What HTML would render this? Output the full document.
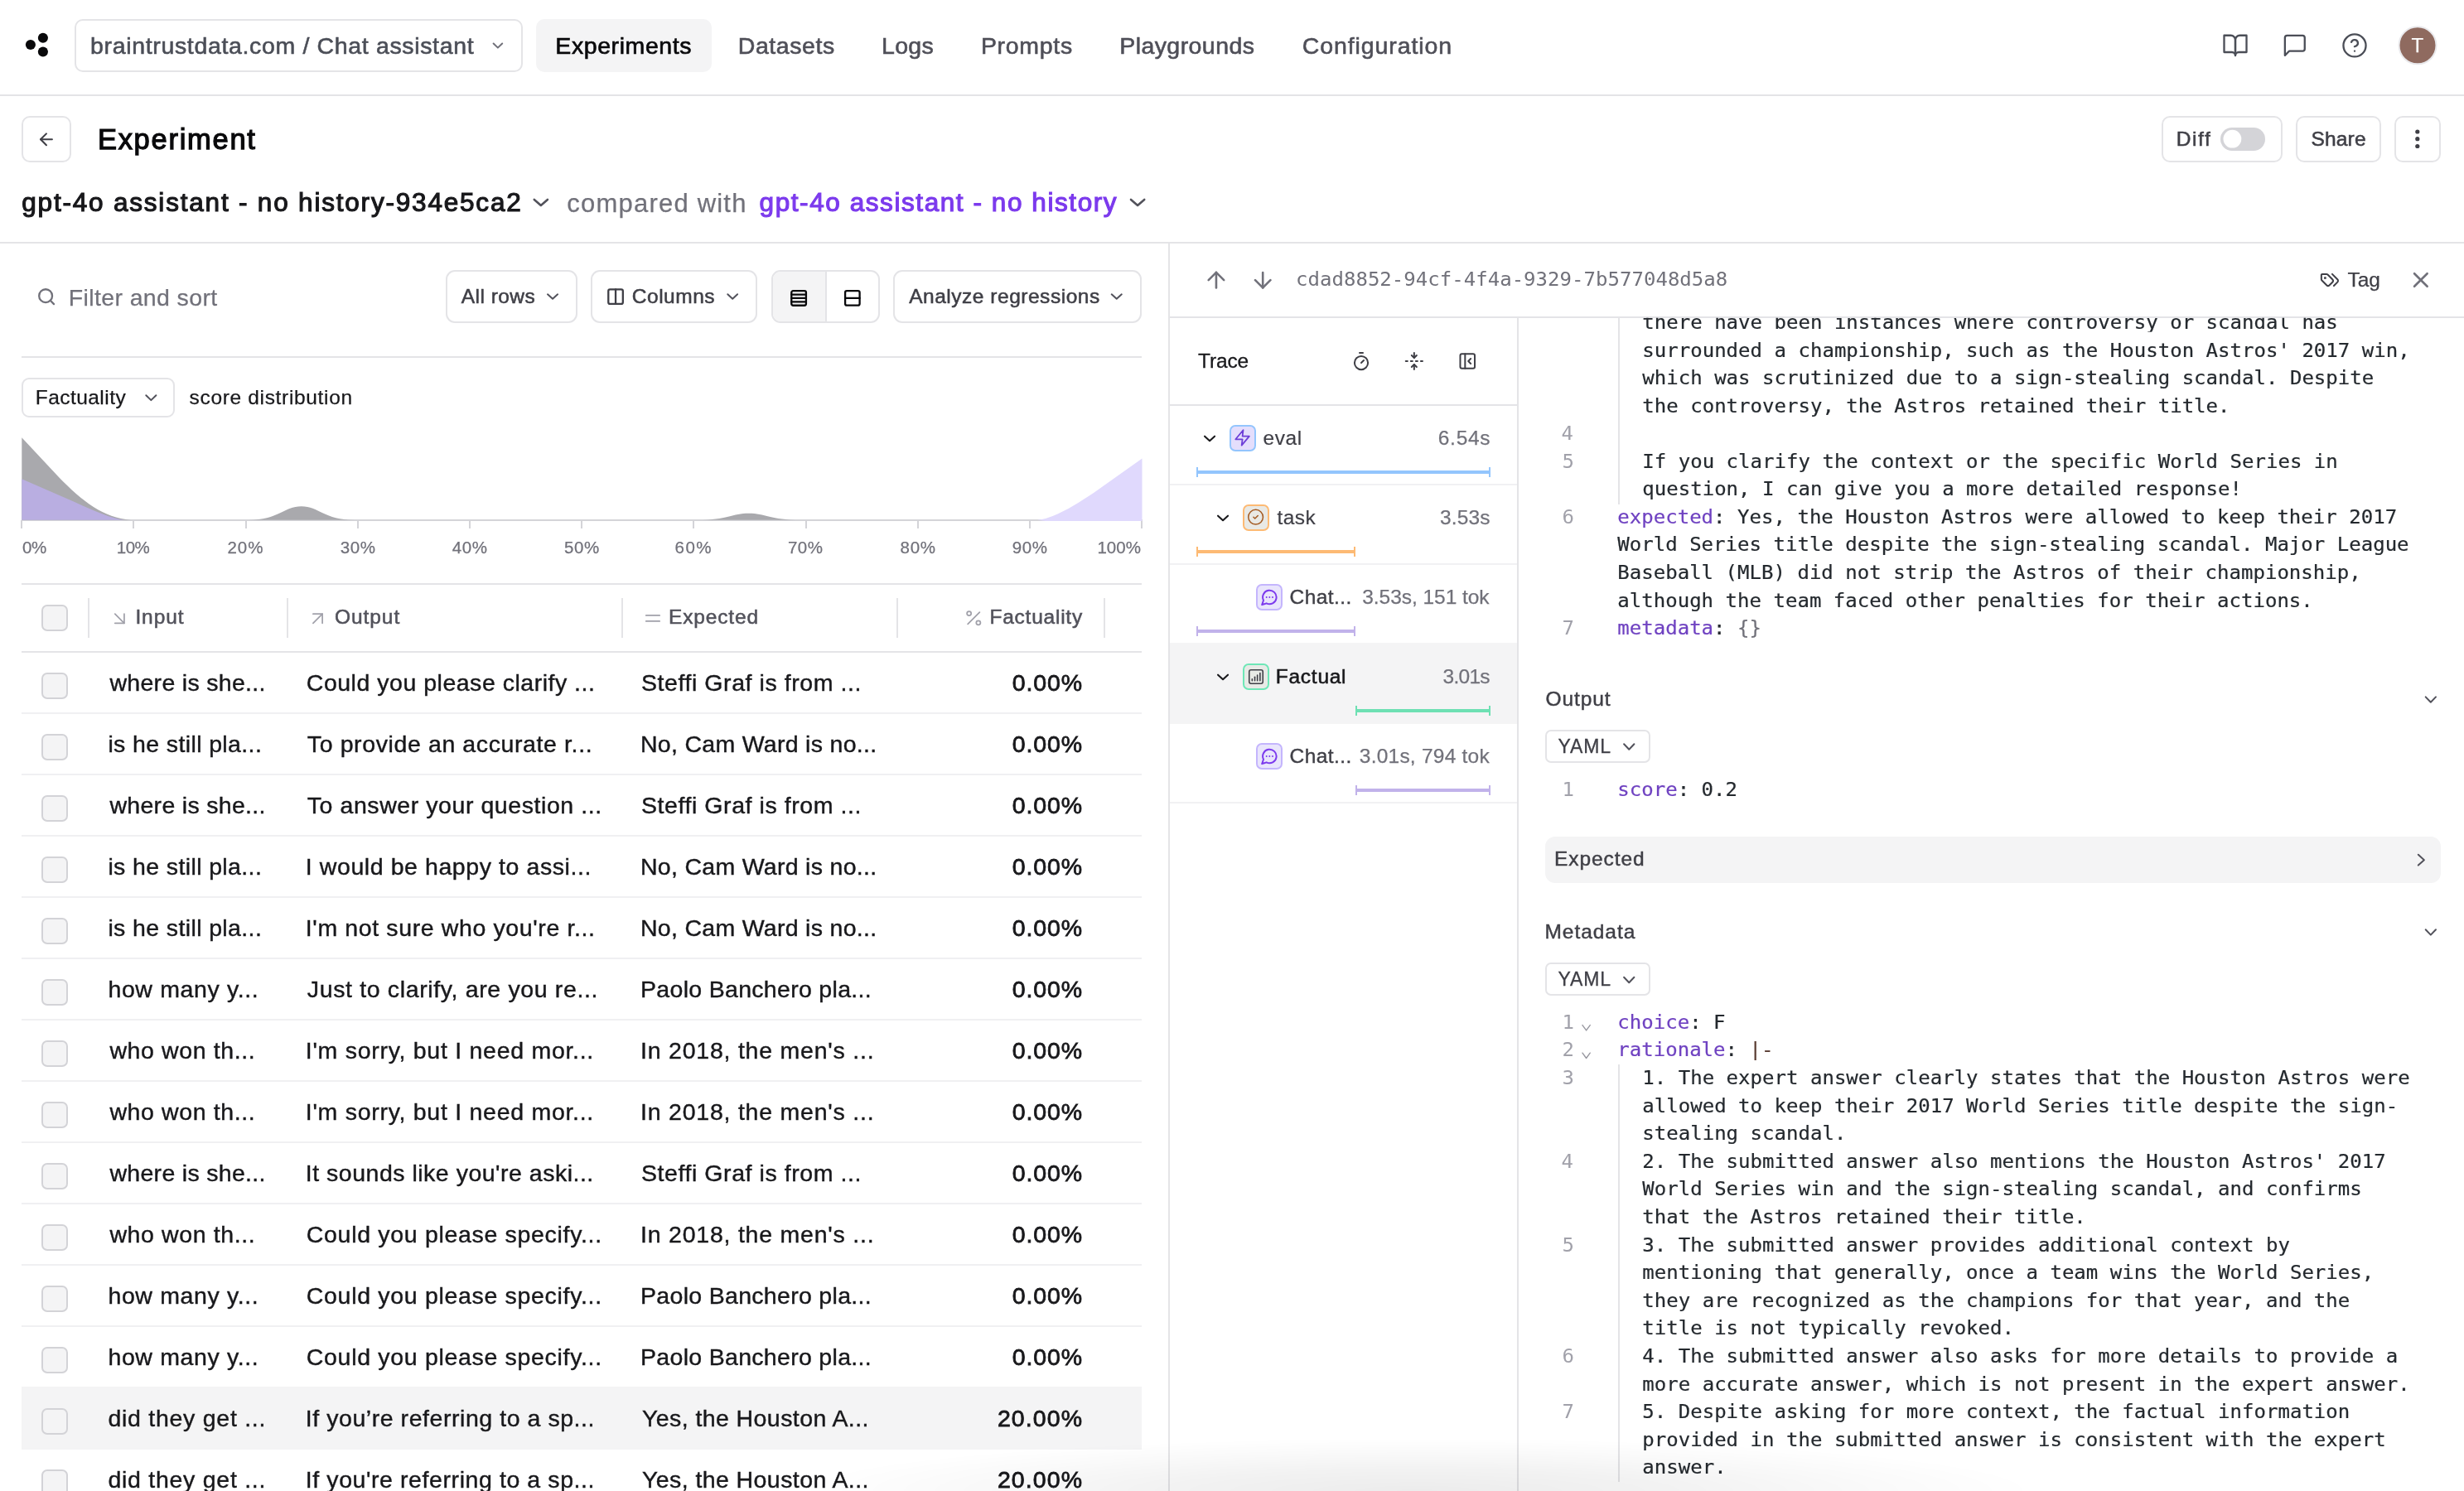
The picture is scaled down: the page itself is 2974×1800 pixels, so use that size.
<!DOCTYPE html>
<html lang="en"><head><meta charset="utf-8">
<title>Experiment - Chat assistant</title>
<style>
html,body{margin:0;padding:0;background:#fff;}
body{width:2974px;height:1800px;position:relative;overflow:hidden;font-family:"Liberation Sans", sans-serif;}
.b{position:absolute;box-sizing:border-box;}
.t{position:absolute;white-space:pre;font-family:"Liberation Sans", sans-serif;font-kerning:normal;}
.m{font-family:"DejaVu Sans Mono", "Liberation Mono", monospace;transform:scaleY(.955);transform-origin:0 84.6%;}
svg.ov{position:absolute;left:0;top:0;}
#tx{position:absolute;left:0;top:0;width:2974px;height:1800px;will-change:transform;}
</style></head><body>
<div class="b" style="left:90px;top:23px;width:541px;height:64px;border:2px solid #e4e4e7;border-radius:10px;"></div>
<div class="b" style="left:647px;top:23px;width:212px;height:64px;background:#f4f4f5;border-radius:10px;"></div>
<div class="b" style="left:0px;top:114px;width:2974px;height:2px;background:#e4e4e7;"></div>
<div class="b" style="left:26px;top:140px;width:60px;height:56px;border:2px solid #e4e4e7;border-radius:10px;"></div>
<div class="b" style="left:2609px;top:140px;width:146px;height:56px;border:2px solid #e4e4e7;border-radius:10px;"></div>
<div class="b" style="left:2680px;top:153.5px;width:54px;height:28.5px;background:#d4d4d8;border-radius:15px;"></div>
<div class="b" style="left:2771px;top:140px;width:103px;height:56px;border:2px solid #e4e4e7;border-radius:10px;"></div>
<div class="b" style="left:2890px;top:140px;width:56px;height:56px;border:2px solid #e4e4e7;border-radius:10px;"></div>
<div class="b" style="left:0px;top:292px;width:2974px;height:2px;background:#e4e4e7;"></div>
<div class="b" style="left:1410px;top:294px;width:2px;height:1506px;background:#e4e4e7;"></div>
<div class="b" style="left:538px;top:326px;width:159px;height:64px;border:2px solid #e4e4e7;border-radius:11px;"></div>
<div class="b" style="left:713px;top:326px;width:201px;height:64px;border:2px solid #e4e4e7;border-radius:11px;"></div>
<div class="b" style="left:931px;top:326px;width:131px;height:64px;border:2px solid #e4e4e7;border-radius:11px;overflow:hidden;"></div>
<div class="b" style="left:933px;top:328px;width:63px;height:60px;background:#f4f4f5;border-radius:9px 0 0 9px;"></div>
<div class="b" style="left:996px;top:328px;width:2px;height:60px;background:#e4e4e7;"></div>
<div class="b" style="left:1078px;top:326px;width:300px;height:64px;border:2px solid #e4e4e7;border-radius:11px;"></div>
<div class="b" style="left:26px;top:430px;width:1352px;height:2px;background:#e4e4e7;"></div>
<div class="b" style="left:26px;top:456px;width:185px;height:48px;border:2px solid #e4e4e7;border-radius:9px;"></div>
<div class="b" style="left:26px;top:627px;width:1353px;height:2px;background:#d4d4d8;"></div>
<div class="b" style="left:25px;top:628px;width:2px;height:10px;background:#d4d4d8;"></div>
<div class="b" style="left:160px;top:628px;width:2px;height:10px;background:#d4d4d8;"></div>
<div class="b" style="left:296px;top:628px;width:2px;height:10px;background:#d4d4d8;"></div>
<div class="b" style="left:431px;top:628px;width:2px;height:10px;background:#d4d4d8;"></div>
<div class="b" style="left:566px;top:628px;width:2px;height:10px;background:#d4d4d8;"></div>
<div class="b" style="left:701px;top:628px;width:2px;height:10px;background:#d4d4d8;"></div>
<div class="b" style="left:836px;top:628px;width:2px;height:10px;background:#d4d4d8;"></div>
<div class="b" style="left:972px;top:628px;width:2px;height:10px;background:#d4d4d8;"></div>
<div class="b" style="left:1107px;top:628px;width:2px;height:10px;background:#d4d4d8;"></div>
<div class="b" style="left:1242px;top:628px;width:2px;height:10px;background:#d4d4d8;"></div>
<div class="b" style="left:1377px;top:628px;width:2px;height:10px;background:#d4d4d8;"></div>
<div class="b" style="left:26px;top:704px;width:1352px;height:2px;background:#e4e4e7;"></div>
<div class="b" style="left:50px;top:730px;width:32px;height:32px;border:2px solid #d3d3d7;border-radius:7px;background:#f4f4f5;"></div>
<div class="b" style="left:106px;top:722px;width:2px;height:48px;background:#e4e4e7;"></div>
<div class="b" style="left:346px;top:722px;width:2px;height:48px;background:#e4e4e7;"></div>
<div class="b" style="left:750px;top:722px;width:2px;height:48px;background:#e4e4e7;"></div>
<div class="b" style="left:1082px;top:722px;width:2px;height:48px;background:#e4e4e7;"></div>
<div class="b" style="left:1332px;top:722px;width:2px;height:48px;background:#e4e4e7;"></div>
<div class="b" style="left:26px;top:786px;width:1352px;height:2px;background:#e4e4e7;"></div>
<div class="b" style="left:26px;top:860px;width:1352px;height:2px;background:#f0f0f2;"></div>
<div class="b" style="left:50px;top:812px;width:32px;height:32px;border:2px solid #d3d3d7;border-radius:7px;background:#f4f4f5;"></div>
<div class="b" style="left:26px;top:934px;width:1352px;height:2px;background:#f0f0f2;"></div>
<div class="b" style="left:50px;top:886px;width:32px;height:32px;border:2px solid #d3d3d7;border-radius:7px;background:#f4f4f5;"></div>
<div class="b" style="left:26px;top:1008px;width:1352px;height:2px;background:#f0f0f2;"></div>
<div class="b" style="left:50px;top:960px;width:32px;height:32px;border:2px solid #d3d3d7;border-radius:7px;background:#f4f4f5;"></div>
<div class="b" style="left:26px;top:1082px;width:1352px;height:2px;background:#f0f0f2;"></div>
<div class="b" style="left:50px;top:1034px;width:32px;height:32px;border:2px solid #d3d3d7;border-radius:7px;background:#f4f4f5;"></div>
<div class="b" style="left:26px;top:1156px;width:1352px;height:2px;background:#f0f0f2;"></div>
<div class="b" style="left:50px;top:1108px;width:32px;height:32px;border:2px solid #d3d3d7;border-radius:7px;background:#f4f4f5;"></div>
<div class="b" style="left:26px;top:1230px;width:1352px;height:2px;background:#f0f0f2;"></div>
<div class="b" style="left:50px;top:1182px;width:32px;height:32px;border:2px solid #d3d3d7;border-radius:7px;background:#f4f4f5;"></div>
<div class="b" style="left:26px;top:1304px;width:1352px;height:2px;background:#f0f0f2;"></div>
<div class="b" style="left:50px;top:1256px;width:32px;height:32px;border:2px solid #d3d3d7;border-radius:7px;background:#f4f4f5;"></div>
<div class="b" style="left:26px;top:1378px;width:1352px;height:2px;background:#f0f0f2;"></div>
<div class="b" style="left:50px;top:1330px;width:32px;height:32px;border:2px solid #d3d3d7;border-radius:7px;background:#f4f4f5;"></div>
<div class="b" style="left:26px;top:1452px;width:1352px;height:2px;background:#f0f0f2;"></div>
<div class="b" style="left:50px;top:1404px;width:32px;height:32px;border:2px solid #d3d3d7;border-radius:7px;background:#f4f4f5;"></div>
<div class="b" style="left:26px;top:1526px;width:1352px;height:2px;background:#f0f0f2;"></div>
<div class="b" style="left:50px;top:1478px;width:32px;height:32px;border:2px solid #d3d3d7;border-radius:7px;background:#f4f4f5;"></div>
<div class="b" style="left:26px;top:1600px;width:1352px;height:2px;background:#f0f0f2;"></div>
<div class="b" style="left:50px;top:1552px;width:32px;height:32px;border:2px solid #d3d3d7;border-radius:7px;background:#f4f4f5;"></div>
<div class="b" style="left:26px;top:1674px;width:1352px;height:2px;background:#f0f0f2;"></div>
<div class="b" style="left:50px;top:1626px;width:32px;height:32px;border:2px solid #d3d3d7;border-radius:7px;background:#f4f4f5;"></div>
<div class="b" style="left:26px;top:1674px;width:1352px;height:76px;background:#f4f4f5;"></div>
<div class="b" style="left:50px;top:1700px;width:32px;height:32px;border:2px solid #d3d3d7;border-radius:7px;background:#f4f4f5;"></div>
<div class="b" style="left:50px;top:1774px;width:32px;height:32px;border:2px solid #d3d3d7;border-radius:7px;background:#f4f4f5;"></div>
<div class="b" style="left:1412px;top:382px;width:1562px;height:2px;background:#e4e4e7;"></div>
<div class="b" style="left:1412px;top:488px;width:420px;height:2px;background:#e4e4e7;"></div>
<div class="b" style="left:1831px;top:384px;width:2px;height:1416px;background:#e4e4e7;"></div>
<div class="b" style="left:1412px;top:584px;width:419px;height:2px;background:#f1f1f3;"></div>
<div class="b" style="left:1484px;top:513px;width:32px;height:32px;background:#e4defc;border:2px solid #93c5fd;border-radius:7px;"></div>
<div class="b" style="left:1444px;top:568px;width:355px;height:4.4px;background:#93c5fd;"></div>
<div class="b" style="left:1444px;top:564px;width:2px;height:12px;background:#93c5fd;"></div>
<div class="b" style="left:1797px;top:564px;width:2px;height:12px;background:#93c5fd;"></div>
<div class="b" style="left:1412px;top:680px;width:419px;height:2px;background:#f1f1f3;"></div>
<div class="b" style="left:1500px;top:609px;width:32px;height:32px;background:#e9e9e5;border:2px solid #fdba74;border-radius:7px;"></div>
<div class="b" style="left:1444px;top:664px;width:192px;height:4.4px;background:#fdba74;"></div>
<div class="b" style="left:1444px;top:660px;width:2px;height:12px;background:#fdba74;"></div>
<div class="b" style="left:1634px;top:660px;width:2px;height:12px;background:#fdba74;"></div>
<div class="b" style="left:1516px;top:705px;width:32px;height:32px;background:#e9e5fc;border:2px solid #c4b5fd;border-radius:7px;"></div>
<div class="b" style="left:1444px;top:760px;width:192px;height:4.4px;background:#c1b2ea;"></div>
<div class="b" style="left:1444px;top:756px;width:2px;height:12px;background:#c1b2ea;"></div>
<div class="b" style="left:1634px;top:756px;width:2px;height:12px;background:#c1b2ea;"></div>
<div class="b" style="left:1412px;top:776px;width:419px;height:98px;background:#f4f4f5;"></div>
<div class="b" style="left:1500px;top:801px;width:32px;height:32px;background:#e8eae6;border:2px solid #6ee7b7;border-radius:7px;"></div>
<div class="b" style="left:1636px;top:856px;width:163px;height:4.4px;background:#6ee0b3;"></div>
<div class="b" style="left:1636px;top:852px;width:2px;height:12px;background:#6ee0b3;"></div>
<div class="b" style="left:1797px;top:852px;width:2px;height:12px;background:#6ee0b3;"></div>
<div class="b" style="left:1412px;top:968px;width:419px;height:2px;background:#f1f1f3;"></div>
<div class="b" style="left:1516px;top:897px;width:32px;height:32px;background:#e9e5fc;border:2px solid #c4b5fd;border-radius:7px;"></div>
<div class="b" style="left:1636px;top:952px;width:163px;height:4.4px;background:#c1b2ea;"></div>
<div class="b" style="left:1636px;top:948px;width:2px;height:12px;background:#c1b2ea;"></div>
<div class="b" style="left:1797px;top:948px;width:2px;height:12px;background:#c1b2ea;"></div>
<div class="b" style="left:1953px;top:384px;width:2px;height:225px;background:#e4e4e7;"></div>
<div class="b" style="left:1865px;top:881px;width:127px;height:40px;border:2px solid #e4e4e7;border-radius:7px;"></div>
<div class="b" style="left:1865px;top:1010px;width:1081px;height:56px;background:#f4f4f5;border-radius:12px;"></div>
<div class="b" style="left:1865px;top:1162px;width:127px;height:40px;border:2px solid #e4e4e7;border-radius:7px;"></div>
<div class="b" style="left:1953px;top:1285px;width:2px;height:504px;background:#e4e4e7;"></div>
<div class="b" style="left:960px;top:1736px;width:1500px;height:64px;background:radial-gradient(ellipse 50% 100% at 50% 100%,rgba(0,0,0,.075) 0%,rgba(0,0,0,.05) 40%,rgba(0,0,0,.018) 75%,rgba(0,0,0,0) 100%);z-index:5;"></div>
<svg class="ov" width="2974" height="1800" viewBox="0 0 2974 1800">
<circle cx="36.9" cy="54" r="6.05" fill="#09090b"/>
<circle cx="51.9" cy="45.8" r="6.05" fill="#09090b"/>
<circle cx="51.9" cy="62.5" r="6.05" fill="#09090b"/>
<polyline points="595.60,52.50 600.90,57.60 606.20,52.50" fill="none" stroke="#71717a" stroke-width="2.0" stroke-linecap="round" stroke-linejoin="round"/>
<g transform="translate(2681.79 38.69) scale(1.3508)" fill="none" stroke="#4b4e57" stroke-width="1.7026526835286855" stroke-linecap="round" stroke-linejoin="round" ><path d="M2 3h6a4 4 0 0 1 4 4v14a3 3 0 0 0-3-3H2z"/><path d="M22 3h-6a4 4 0 0 0-4 4v14a3 3 0 0 1 3-3h7z"/></g>
<g transform="translate(2753.87 38.97) scale(1.3278)" fill="none" stroke="#4b4e57" stroke-width="1.7322175732217535" stroke-linecap="round" stroke-linejoin="round" ><path d="M21 15a2 2 0 0 1-2 2H7l-4 4V5a2 2 0 0 1 2-2h14a2 2 0 0 1 2 2z"/></g>
<g transform="translate(2825.74 38.64) scale(1.3550)" fill="none" stroke="#4b4e57" stroke-width="1.6974169741697298" stroke-linecap="round" stroke-linejoin="round" ><circle cx="12" cy="12" r="10"/><path d="M9.09 9a3 3 0 0 1 5.83 1c0 2-3 3-3 3"/><path d="M12 17h.01"/></g>
<circle cx="2918" cy="54.8" r="22.5" fill="#8f6a5f" stroke="#e9e9ec" stroke-width="2"/>
<g transform="translate(44.08 156.43) scale(0.9893)" fill="none" stroke="#3f3f46" stroke-width="2.122743682310469" stroke-linecap="round" stroke-linejoin="round" ><path d="m12 19-7-7 7-7"/><path d="M19 12H5"/></g>
<circle cx="2694.4" cy="167.7" r="10.9" fill="#fff"/>
<circle cx="2917.8" cy="159" r="2.6" fill="#3f3f46"/>
<circle cx="2917.8" cy="167.7" r="2.6" fill="#3f3f46"/>
<circle cx="2917.8" cy="176.5" r="2.6" fill="#3f3f46"/>
<polyline points="644.80,240.90 652.85,247.90 660.90,240.90" fill="none" stroke="#52525b" stroke-width="2.6" stroke-linecap="round" stroke-linejoin="round"/>
<polyline points="1365.00,240.90 1373.10,247.90 1381.20,240.90" fill="none" stroke="#52525b" stroke-width="2.6" stroke-linecap="round" stroke-linejoin="round"/>
<g transform="translate(44.20 346.25) scale(0.9917)" fill="none" stroke="#71717a" stroke-width="2.3193277310924345" stroke-linecap="round" stroke-linejoin="round" ><circle cx="11" cy="11" r="8"/><path d="m21 21-4.3-4.3"/></g>
<polyline points="661.00,355.30 667.05,360.80 673.10,355.30" fill="none" stroke="#52525b" stroke-width="2.0" stroke-linecap="round" stroke-linejoin="round"/>
<g transform="translate(731.35 346.40) scale(0.9750)" fill="none" stroke="#3f3f46" stroke-width="2.3589743589743595" stroke-linecap="round" stroke-linejoin="round" ><rect x="3" y="3" width="18" height="18" rx="2"/><path d="M12 3v18"/></g>
<polyline points="878.30,355.30 884.20,360.80 890.10,355.30" fill="none" stroke="#52525b" stroke-width="2.0" stroke-linecap="round" stroke-linejoin="round"/>
<g transform="translate(952.33 348.18) scale(0.9806)" fill="none" stroke="#09090b" stroke-width="2.345609065155809" stroke-linecap="round" stroke-linejoin="round" ><rect x="3" y="3" width="18" height="18" rx="2"/><path d="M3 7.5h18"/><path d="M3 12h18"/><path d="M3 16.5h18"/></g>
<g transform="translate(1017.18 348.28) scale(0.9722)" fill="none" stroke="#09090b" stroke-width="2.3657142857142763" stroke-linecap="round" stroke-linejoin="round" ><rect x="3" y="3" width="18" height="18" rx="2"/><path d="M3 12h18"/></g>
<polyline points="1341.70,355.30 1347.75,360.80 1353.80,355.30" fill="none" stroke="#52525b" stroke-width="2.0" stroke-linecap="round" stroke-linejoin="round"/>
<polyline points="176.30,477.20 182.35,483.10 188.40,477.20" fill="none" stroke="#52525b" stroke-width="2.0" stroke-linecap="round" stroke-linejoin="round"/>
<path d="M26.3 627.8 L26.3 528.3 L70 575 C100 606 125 625 158 627.8 Z" fill="#a9a9ad"/>
<path d="M26.3 627.8 L26.3 578.3 L90 606 C115 617.5 135 626 150 627.8 Z" fill="#b9aee1"/>
<path d="M300 627.8 C336 627.8 343 611.3 363.8 611.3 C384.6 611.3 391.6 627.8 427.6 627.8 Z" fill="#a9a9ad"/>
<path d="M842 627.8 C878 627.8 884 619.8 903.7 619.8 C923.4 619.8 930 627.8 966 627.8 Z" fill="#a9a9ad"/>
<path d="M1252.3 627.8 C1275 625 1300 608 1320 595 L1378.5 553.5 L1378.5 629 L1262 629 Z" fill="#e0d9fd"/>
<g transform="translate(130.97 733.37) scale(1.1150)" fill="none" stroke="#a1a1aa" stroke-width="1.5695067264573923" stroke-linecap="round" stroke-linejoin="round" ><path d="m7 7 10 10"/><path d="M17 7v10H7"/></g>
<g transform="translate(370.06 733.31) scale(1.1200)" fill="none" stroke="#a1a1aa" stroke-width="1.5624999999999936" stroke-linecap="round" stroke-linejoin="round" ><path d="M7 7h10v10"/><path d="M7 17 17 7"/></g>
<g transform="translate(773.91 732.41) scale(1.1702)" fill="none" stroke="#a1a1aa" stroke-width="1.4954221770091496" stroke-linecap="round" stroke-linejoin="round" ><path d="M5 9h14"/><path d="M5 15h14"/></g>
<g transform="translate(1163.03 733.98) scale(1.0188)" fill="none" stroke="#a1a1aa" stroke-width="1.7177914110429435" stroke-linecap="round" stroke-linejoin="round" ><path d="M19 5 5 19"/><circle cx="6.5" cy="6.5" r="2.5"/><circle cx="17.5" cy="17.5" r="2.5"/></g>
<g transform="translate(1452.05 322.30) scale(1.3250)" fill="none" stroke="#71717a" stroke-width="1.9622641509433927" stroke-linecap="round" stroke-linejoin="round" ><path d="m5 12 7-7 7 7"/><path d="M12 19V5"/></g>
<g transform="translate(1508.43 322.43) scale(1.3143)" fill="none" stroke="#71717a" stroke-width="1.9782608695652237" stroke-linecap="round" stroke-linejoin="round" ><path d="M12 5v14"/><path d="m19 12-7 7-7-7"/></g>
<g color="#3f3f46">
<g transform="translate(2799.83 325.88) scale(1.0057)" fill="none" stroke="#3f3f46" stroke-width="1.9886363636363538" stroke-linecap="round" stroke-linejoin="round" ><path d="m15 5 6.3 6.3a2.4 2.4 0 0 1 0 3.4L17 19"/><path d="M9.586 5.586A2 2 0 0 0 8.172 5H3a1 1 0 0 0-1 1v5.172a2 2 0 0 0 .586 1.414L8.29 18.29a2.426 2.426 0 0 0 3.42 0l3.58-3.58a2.426 2.426 0 0 0 0-3.42z"/><circle cx="6.5" cy="9.5" r=".5" fill="currentColor"/></g>
</g>
<g transform="translate(2906.30 322.45) scale(1.2958)" fill="none" stroke="#71717a" stroke-width="2.006430868167191" stroke-linecap="round" stroke-linejoin="round" ><path d="M18 6 6 18"/><path d="m6 6 12 12"/></g>
<g transform="translate(1630.85 423.85) scale(1.0125)" fill="none" stroke="#3f3f46" stroke-width="1.9753086419753032" stroke-linecap="round" stroke-linejoin="round" ><path d="M10 2h4"/><path d="M12 14l3-3"/><circle cx="12" cy="14" r="8"/></g>
<g transform="translate(1694.76 423.91) scale(1.0075)" fill="none" stroke="#3f3f46" stroke-width="1.9851116625310194" stroke-linecap="round" stroke-linejoin="round" ><path d="M12 22v-6"/><path d="M12 8V2"/><path d="M4 12H2"/><path d="M10 12H8"/><path d="M16 12h-2"/><path d="M22 12h-2"/><path d="m15 19-3-3-3 3"/><path d="m15 5-3 3-3-3"/></g>
<g transform="translate(1759.55 424.30) scale(0.9750)" fill="none" stroke="#3f3f46" stroke-width="2.0512820512820498" stroke-linecap="round" stroke-linejoin="round" ><rect x="3" y="3" width="18" height="18" rx="2"/><path d="M9 3v18"/><path d="m16 15-3-3 3-3"/></g>
<polyline points="1454.05,526.65 1460.05,532.15 1466.05,526.65" fill="none" stroke="#18181b" stroke-width="2.1" stroke-linecap="round" stroke-linejoin="round"/>
<g transform="translate(1488.56 517.40) scale(0.9200)" fill="none" stroke="#6d3fd8" stroke-width="1.95" stroke-linecap="round" stroke-linejoin="round" ><path d="M13 2 3 14h9l-1 8 10-12h-9l1-8z"/></g>
<polyline points="1470.05,622.65 1476.05,628.15 1482.05,622.65" fill="none" stroke="#18181b" stroke-width="2.1" stroke-linecap="round" stroke-linejoin="round"/>
<g transform="translate(1504.98 613.60) scale(0.8850)" fill="none" stroke="#a35a22" stroke-width="1.7" stroke-linecap="round" stroke-linejoin="round" ><circle cx="12" cy="12" r="10"/><path d="m9 12 2 2 4-4"/></g>
<g transform="translate(1521.35 710.00) scale(0.9160)" fill="none" stroke="#7c3aed" stroke-width="2.15" stroke-linecap="round" stroke-linejoin="round" ><path d="M7.9 20A9 9 0 1 0 4 16.1L2 22Z"/><path d="M8 12h.01"/><path d="M12 12h.01"/><path d="M16 12h.01"/></g>
<polyline points="1470.05,814.65 1476.05,820.15 1482.05,814.65" fill="none" stroke="#18181b" stroke-width="2.1" stroke-linecap="round" stroke-linejoin="round"/>
<g transform="translate(1505.00 806.00) scale(0.9167)" fill="none" stroke="#3f3f46" stroke-width="1.75" stroke-linecap="round" stroke-linejoin="round" ><rect x="3" y="3" width="18" height="18" rx="2.4"/><path d="M6.9 17.2v-2.2"/><path d="M10.4 17.2v-4.8"/><path d="M13.8 17.2v-7.4"/><path d="M17.3 17.2v-10"/></g>
<g transform="translate(1521.35 902.00) scale(0.9160)" fill="none" stroke="#7c3aed" stroke-width="2.15" stroke-linecap="round" stroke-linejoin="round" ><path d="M7.9 20A9 9 0 1 0 4 16.1L2 22Z"/><path d="M8 12h.01"/><path d="M12 12h.01"/><path d="M16 12h.01"/></g>
<polyline points="2927.70,841.40 2933.85,847.70 2940.00,841.40" fill="none" stroke="#52525b" stroke-width="2.0" stroke-linecap="round" stroke-linejoin="round"/>
<polyline points="1960.10,898.20 1966.25,904.70 1972.40,898.20" fill="none" stroke="#52525b" stroke-width="2.0" stroke-linecap="round" stroke-linejoin="round"/>
<polyline points="2918.80,1031.70 2925.90,1038.15 2918.80,1044.60" fill="none" stroke="#52525b" stroke-width="2.0" stroke-linecap="round" stroke-linejoin="round"/>
<polyline points="2927.70,1122.30 2933.85,1128.60 2940.00,1122.30" fill="none" stroke="#52525b" stroke-width="2.0" stroke-linecap="round" stroke-linejoin="round"/>
<polyline points="1960.10,1179.70 1966.25,1186.20 1972.40,1179.70" fill="none" stroke="#52525b" stroke-width="2.0" stroke-linecap="round" stroke-linejoin="round"/>
<polyline points="1909.97,1237.57 1914.60,1243.92 1919.23,1237.57" fill="none" stroke="#96969e" stroke-width="1.35" stroke-linecap="round" stroke-linejoin="round"/>
<polyline points="1909.97,1271.17 1914.60,1277.52 1919.23,1271.17" fill="none" stroke="#96969e" stroke-width="1.35" stroke-linecap="round" stroke-linejoin="round"/>
</svg>
<div id="tx">
<span class="t" style="left:109.10px;top:40.87px;font-size:28.5px;line-height:28.5px;color:#4b4e57;letter-spacing:0.651px;-webkit-text-stroke:0.6px #4b4e57;">braintrustdata.com / Chat assistant</span>
<span class="t" style="left:670.33px;top:40.87px;font-size:28.5px;line-height:28.5px;color:#09090b;letter-spacing:0.581px;-webkit-text-stroke:0.65px #09090b;">Experiments</span>
<span class="t" style="left:890.80px;top:40.87px;font-size:28.5px;line-height:28.5px;color:#4f4f58;letter-spacing:0.569px;-webkit-text-stroke:0.6px #4f4f58;">Datasets</span>
<span class="t" style="left:1064.00px;top:40.87px;font-size:28.5px;line-height:28.5px;color:#4f4f58;letter-spacing:0.316px;-webkit-text-stroke:0.6px #4f4f58;">Logs</span>
<span class="t" style="left:1183.90px;top:40.87px;font-size:28.5px;line-height:28.5px;color:#4f4f58;letter-spacing:0.690px;-webkit-text-stroke:0.6px #4f4f58;">Prompts</span>
<span class="t" style="left:1351.20px;top:40.87px;font-size:28.5px;line-height:28.5px;color:#4f4f58;letter-spacing:0.432px;-webkit-text-stroke:0.6px #4f4f58;">Playgrounds</span>
<span class="t" style="left:1571.70px;top:40.87px;font-size:28.5px;line-height:28.5px;color:#4f4f58;letter-spacing:0.910px;-webkit-text-stroke:0.6px #4f4f58;">Configuration</span>
<span class="t" style="left:2910.62px;top:42.88px;font-size:24px;line-height:24px;color:#ffffff;-webkit-text-stroke:0.25px #ffffff;">T</span>
<span class="t" style="left:117.92px;top:151.29px;font-size:34.5px;line-height:34.5px;color:#09090b;letter-spacing:1.727px;-webkit-text-stroke:1.25px #09090b;">Experiment</span>
<span class="t" style="left:2626.78px;top:156.26px;font-size:24.5px;line-height:24.5px;color:#3f3f46;letter-spacing:1.550px;-webkit-text-stroke:0.55px #3f3f46;">Diff</span>
<span class="t" style="left:2789.47px;top:156.26px;font-size:24.5px;line-height:24.5px;color:#3f3f46;letter-spacing:0.175px;-webkit-text-stroke:0.55px #3f3f46;">Share</span>
<span class="t" style="left:26.27px;top:229.13px;font-size:31.5px;line-height:31.5px;color:#18181b;letter-spacing:1.802px;-webkit-text-stroke:1.15px #18181b;">gpt-4o assistant - no history-934e5ca2</span>
<span class="t" style="left:684.33px;top:229.55px;font-size:31px;line-height:31px;color:#71717a;letter-spacing:1.208px;-webkit-text-stroke:0.25px #71717a;">compared with</span>
<span class="t" style="left:916.58px;top:229.13px;font-size:31.5px;line-height:31.5px;color:#7c3aed;letter-spacing:1.574px;-webkit-text-stroke:1.15px #7c3aed;">gpt-4o assistant - no history</span>
<span class="t" style="left:82.83px;top:345.17px;font-size:28.5px;line-height:28.5px;color:#71717a;letter-spacing:0.367px;-webkit-text-stroke:0.25px #71717a;">Filter and sort</span>
<span class="t" style="left:556.77px;top:346.26px;font-size:24.5px;line-height:24.5px;color:#3f3f46;letter-spacing:0.463px;-webkit-text-stroke:0.55px #3f3f46;">All rows</span>
<span class="t" style="left:762.77px;top:346.26px;font-size:24.5px;line-height:24.5px;color:#3f3f46;letter-spacing:0.521px;-webkit-text-stroke:0.55px #3f3f46;">Columns</span>
<span class="t" style="left:1097.18px;top:346.26px;font-size:24.5px;line-height:24.5px;color:#3f3f46;letter-spacing:0.522px;-webkit-text-stroke:0.55px #3f3f46;">Analyze regressions</span>
<span class="t" style="left:42.83px;top:467.76px;font-size:24.5px;line-height:24.5px;color:#18181b;letter-spacing:0.440px;-webkit-text-stroke:0.25px #18181b;">Factuality</span>
<span class="t" style="left:228.62px;top:467.76px;font-size:24.5px;line-height:24.5px;color:#18181b;letter-spacing:0.663px;-webkit-text-stroke:0.25px #18181b;">score distribution</span>
<span class="t" style="left:27.02px;top:650.94px;font-size:20.5px;line-height:20.5px;color:#71717a;letter-spacing:-0.451px;-webkit-text-stroke:0.25px #71717a;">0%</span>
<span class="t" style="left:140.82px;top:650.94px;font-size:20.5px;line-height:20.5px;color:#71717a;letter-spacing:-0.576px;-webkit-text-stroke:0.25px #71717a;">10%</span>
<span class="t" style="left:274.43px;top:650.94px;font-size:20.5px;line-height:20.5px;color:#71717a;letter-spacing:0.974px;-webkit-text-stroke:0.25px #71717a;">20%</span>
<span class="t" style="left:410.73px;top:650.94px;font-size:20.5px;line-height:20.5px;color:#71717a;letter-spacing:0.624px;-webkit-text-stroke:0.25px #71717a;">30%</span>
<span class="t" style="left:545.73px;top:650.94px;font-size:20.5px;line-height:20.5px;color:#71717a;letter-spacing:0.624px;-webkit-text-stroke:0.25px #71717a;">40%</span>
<span class="t" style="left:681.02px;top:650.94px;font-size:20.5px;line-height:20.5px;color:#71717a;letter-spacing:0.624px;-webkit-text-stroke:0.25px #71717a;">50%</span>
<span class="t" style="left:814.52px;top:650.94px;font-size:20.5px;line-height:20.5px;color:#71717a;letter-spacing:1.474px;-webkit-text-stroke:0.25px #71717a;">60%</span>
<span class="t" style="left:951.02px;top:650.94px;font-size:20.5px;line-height:20.5px;color:#71717a;letter-spacing:0.424px;-webkit-text-stroke:0.25px #71717a;">70%</span>
<span class="t" style="left:1086.42px;top:650.94px;font-size:20.5px;line-height:20.5px;color:#71717a;letter-spacing:0.824px;-webkit-text-stroke:0.25px #71717a;">80%</span>
<span class="t" style="left:1221.72px;top:650.94px;font-size:20.5px;line-height:20.5px;color:#71717a;letter-spacing:0.674px;-webkit-text-stroke:0.25px #71717a;">90%</span>
<span class="t" style="left:1324.42px;top:650.94px;font-size:20.5px;line-height:20.5px;color:#71717a;letter-spacing:0.016px;-webkit-text-stroke:0.25px #71717a;">100%</span>
<span class="t" style="left:163.38px;top:733.26px;font-size:24.5px;line-height:24.5px;color:#52525b;letter-spacing:0.941px;-webkit-text-stroke:0.55px #52525b;">Input</span>
<span class="t" style="left:403.97px;top:733.26px;font-size:24.5px;line-height:24.5px;color:#52525b;letter-spacing:0.942px;-webkit-text-stroke:0.55px #52525b;">Output</span>
<span class="t" style="left:806.98px;top:733.26px;font-size:24.5px;line-height:24.5px;color:#52525b;letter-spacing:0.861px;-webkit-text-stroke:0.55px #52525b;">Expected</span>
<span class="t" style="left:1194.48px;top:733.26px;font-size:24.5px;line-height:24.5px;color:#52525b;letter-spacing:0.762px;-webkit-text-stroke:0.55px #52525b;">Factuality</span>
<span class="t" style="left:132.41px;top:809.67px;font-size:28.5px;line-height:28.5px;color:#18181b;letter-spacing:0.304px;-webkit-text-stroke:0.42px #18181b;">where is she...</span>
<span class="t" style="left:369.81px;top:809.67px;font-size:28.5px;line-height:28.5px;color:#18181b;letter-spacing:0.513px;-webkit-text-stroke:0.42px #18181b;">Could you please clarify ...</span>
<span class="t" style="left:774.01px;top:809.67px;font-size:28.5px;line-height:28.5px;color:#18181b;letter-spacing:0.570px;-webkit-text-stroke:0.42px #18181b;">Steffi Graf is from ...</span>
<span class="t" style="left:1221.80px;top:809.67px;font-size:28.5px;line-height:28.5px;color:#18181b;letter-spacing:0.858px;-webkit-text-stroke:0.8px #18181b;">0.00%</span>
<span class="t" style="left:130.41px;top:883.67px;font-size:28.5px;line-height:28.5px;color:#18181b;letter-spacing:0.377px;-webkit-text-stroke:0.42px #18181b;">is he still pla...</span>
<span class="t" style="left:370.81px;top:883.67px;font-size:28.5px;line-height:28.5px;color:#18181b;letter-spacing:0.610px;-webkit-text-stroke:0.42px #18181b;">To provide an accurate r...</span>
<span class="t" style="left:773.01px;top:883.67px;font-size:28.5px;line-height:28.5px;color:#18181b;letter-spacing:0.292px;-webkit-text-stroke:0.42px #18181b;">No, Cam Ward is no...</span>
<span class="t" style="left:1221.80px;top:883.67px;font-size:28.5px;line-height:28.5px;color:#18181b;letter-spacing:0.858px;-webkit-text-stroke:0.8px #18181b;">0.00%</span>
<span class="t" style="left:132.41px;top:957.67px;font-size:28.5px;line-height:28.5px;color:#18181b;letter-spacing:0.304px;-webkit-text-stroke:0.42px #18181b;">where is she...</span>
<span class="t" style="left:370.81px;top:957.67px;font-size:28.5px;line-height:28.5px;color:#18181b;letter-spacing:0.566px;-webkit-text-stroke:0.42px #18181b;">To answer your question ...</span>
<span class="t" style="left:774.01px;top:957.67px;font-size:28.5px;line-height:28.5px;color:#18181b;letter-spacing:0.570px;-webkit-text-stroke:0.42px #18181b;">Steffi Graf is from ...</span>
<span class="t" style="left:1221.80px;top:957.67px;font-size:28.5px;line-height:28.5px;color:#18181b;letter-spacing:0.858px;-webkit-text-stroke:0.8px #18181b;">0.00%</span>
<span class="t" style="left:130.41px;top:1031.67px;font-size:28.5px;line-height:28.5px;color:#18181b;letter-spacing:0.377px;-webkit-text-stroke:0.42px #18181b;">is he still pla...</span>
<span class="t" style="left:368.81px;top:1031.67px;font-size:28.5px;line-height:28.5px;color:#18181b;letter-spacing:0.579px;-webkit-text-stroke:0.42px #18181b;">I would be happy to assi...</span>
<span class="t" style="left:773.01px;top:1031.67px;font-size:28.5px;line-height:28.5px;color:#18181b;letter-spacing:0.292px;-webkit-text-stroke:0.42px #18181b;">No, Cam Ward is no...</span>
<span class="t" style="left:1221.80px;top:1031.67px;font-size:28.5px;line-height:28.5px;color:#18181b;letter-spacing:0.858px;-webkit-text-stroke:0.8px #18181b;">0.00%</span>
<span class="t" style="left:130.41px;top:1105.67px;font-size:28.5px;line-height:28.5px;color:#18181b;letter-spacing:0.377px;-webkit-text-stroke:0.42px #18181b;">is he still pla...</span>
<span class="t" style="left:368.81px;top:1105.67px;font-size:28.5px;line-height:28.5px;color:#18181b;letter-spacing:0.621px;-webkit-text-stroke:0.42px #18181b;">I'm not sure who you're r...</span>
<span class="t" style="left:773.01px;top:1105.67px;font-size:28.5px;line-height:28.5px;color:#18181b;letter-spacing:0.292px;-webkit-text-stroke:0.42px #18181b;">No, Cam Ward is no...</span>
<span class="t" style="left:1221.80px;top:1105.67px;font-size:28.5px;line-height:28.5px;color:#18181b;letter-spacing:0.858px;-webkit-text-stroke:0.8px #18181b;">0.00%</span>
<span class="t" style="left:130.41px;top:1179.67px;font-size:28.5px;line-height:28.5px;color:#18181b;letter-spacing:0.633px;-webkit-text-stroke:0.42px #18181b;">how many y...</span>
<span class="t" style="left:370.81px;top:1179.67px;font-size:28.5px;line-height:28.5px;color:#18181b;letter-spacing:0.642px;-webkit-text-stroke:0.42px #18181b;">Just to clarify, are you re...</span>
<span class="t" style="left:773.01px;top:1179.67px;font-size:28.5px;line-height:28.5px;color:#18181b;letter-spacing:0.309px;-webkit-text-stroke:0.42px #18181b;">Paolo Banchero pla...</span>
<span class="t" style="left:1221.80px;top:1179.67px;font-size:28.5px;line-height:28.5px;color:#18181b;letter-spacing:0.858px;-webkit-text-stroke:0.8px #18181b;">0.00%</span>
<span class="t" style="left:132.41px;top:1253.67px;font-size:28.5px;line-height:28.5px;color:#18181b;letter-spacing:0.614px;-webkit-text-stroke:0.42px #18181b;">who won th...</span>
<span class="t" style="left:368.81px;top:1253.67px;font-size:28.5px;line-height:28.5px;color:#18181b;letter-spacing:0.721px;-webkit-text-stroke:0.42px #18181b;">I'm sorry, but I need mor...</span>
<span class="t" style="left:773.01px;top:1253.67px;font-size:28.5px;line-height:28.5px;color:#18181b;letter-spacing:0.778px;-webkit-text-stroke:0.42px #18181b;">In 2018, the men's ...</span>
<span class="t" style="left:1221.80px;top:1253.67px;font-size:28.5px;line-height:28.5px;color:#18181b;letter-spacing:0.858px;-webkit-text-stroke:0.8px #18181b;">0.00%</span>
<span class="t" style="left:132.41px;top:1327.67px;font-size:28.5px;line-height:28.5px;color:#18181b;letter-spacing:0.614px;-webkit-text-stroke:0.42px #18181b;">who won th...</span>
<span class="t" style="left:368.81px;top:1327.67px;font-size:28.5px;line-height:28.5px;color:#18181b;letter-spacing:0.721px;-webkit-text-stroke:0.42px #18181b;">I'm sorry, but I need mor...</span>
<span class="t" style="left:773.01px;top:1327.67px;font-size:28.5px;line-height:28.5px;color:#18181b;letter-spacing:0.778px;-webkit-text-stroke:0.42px #18181b;">In 2018, the men's ...</span>
<span class="t" style="left:1221.80px;top:1327.67px;font-size:28.5px;line-height:28.5px;color:#18181b;letter-spacing:0.858px;-webkit-text-stroke:0.8px #18181b;">0.00%</span>
<span class="t" style="left:132.41px;top:1401.67px;font-size:28.5px;line-height:28.5px;color:#18181b;letter-spacing:0.304px;-webkit-text-stroke:0.42px #18181b;">where is she...</span>
<span class="t" style="left:368.81px;top:1401.67px;font-size:28.5px;line-height:28.5px;color:#18181b;letter-spacing:0.505px;-webkit-text-stroke:0.42px #18181b;">It sounds like you're aski...</span>
<span class="t" style="left:774.01px;top:1401.67px;font-size:28.5px;line-height:28.5px;color:#18181b;letter-spacing:0.570px;-webkit-text-stroke:0.42px #18181b;">Steffi Graf is from ...</span>
<span class="t" style="left:1221.80px;top:1401.67px;font-size:28.5px;line-height:28.5px;color:#18181b;letter-spacing:0.858px;-webkit-text-stroke:0.8px #18181b;">0.00%</span>
<span class="t" style="left:132.41px;top:1475.67px;font-size:28.5px;line-height:28.5px;color:#18181b;letter-spacing:0.614px;-webkit-text-stroke:0.42px #18181b;">who won th...</span>
<span class="t" style="left:369.81px;top:1475.67px;font-size:28.5px;line-height:28.5px;color:#18181b;letter-spacing:0.685px;-webkit-text-stroke:0.42px #18181b;">Could you please specify...</span>
<span class="t" style="left:773.01px;top:1475.67px;font-size:28.5px;line-height:28.5px;color:#18181b;letter-spacing:0.778px;-webkit-text-stroke:0.42px #18181b;">In 2018, the men's ...</span>
<span class="t" style="left:1221.80px;top:1475.67px;font-size:28.5px;line-height:28.5px;color:#18181b;letter-spacing:0.858px;-webkit-text-stroke:0.8px #18181b;">0.00%</span>
<span class="t" style="left:130.41px;top:1549.67px;font-size:28.5px;line-height:28.5px;color:#18181b;letter-spacing:0.633px;-webkit-text-stroke:0.42px #18181b;">how many y...</span>
<span class="t" style="left:369.81px;top:1549.67px;font-size:28.5px;line-height:28.5px;color:#18181b;letter-spacing:0.685px;-webkit-text-stroke:0.42px #18181b;">Could you please specify...</span>
<span class="t" style="left:773.01px;top:1549.67px;font-size:28.5px;line-height:28.5px;color:#18181b;letter-spacing:0.309px;-webkit-text-stroke:0.42px #18181b;">Paolo Banchero pla...</span>
<span class="t" style="left:1221.80px;top:1549.67px;font-size:28.5px;line-height:28.5px;color:#18181b;letter-spacing:0.858px;-webkit-text-stroke:0.8px #18181b;">0.00%</span>
<span class="t" style="left:130.41px;top:1623.67px;font-size:28.5px;line-height:28.5px;color:#18181b;letter-spacing:0.633px;-webkit-text-stroke:0.42px #18181b;">how many y...</span>
<span class="t" style="left:369.81px;top:1623.67px;font-size:28.5px;line-height:28.5px;color:#18181b;letter-spacing:0.685px;-webkit-text-stroke:0.42px #18181b;">Could you please specify...</span>
<span class="t" style="left:773.01px;top:1623.67px;font-size:28.5px;line-height:28.5px;color:#18181b;letter-spacing:0.309px;-webkit-text-stroke:0.42px #18181b;">Paolo Banchero pla...</span>
<span class="t" style="left:1221.80px;top:1623.67px;font-size:28.5px;line-height:28.5px;color:#18181b;letter-spacing:0.858px;-webkit-text-stroke:0.8px #18181b;">0.00%</span>
<span class="t" style="left:130.41px;top:1697.67px;font-size:28.5px;line-height:28.5px;color:#18181b;letter-spacing:0.731px;-webkit-text-stroke:0.42px #18181b;">did they get ...</span>
<span class="t" style="left:368.81px;top:1697.67px;font-size:28.5px;line-height:28.5px;color:#18181b;letter-spacing:0.553px;-webkit-text-stroke:0.42px #18181b;">If you’re referring to a sp...</span>
<span class="t" style="left:775.01px;top:1697.67px;font-size:28.5px;line-height:28.5px;color:#18181b;letter-spacing:0.415px;-webkit-text-stroke:0.42px #18181b;">Yes, the Houston A...</span>
<span class="t" style="left:1203.90px;top:1697.67px;font-size:28.5px;line-height:28.5px;color:#18181b;letter-spacing:1.096px;-webkit-text-stroke:0.8px #18181b;">20.00%</span>
<span class="t" style="left:130.41px;top:1771.67px;font-size:28.5px;line-height:28.5px;color:#18181b;letter-spacing:0.731px;-webkit-text-stroke:0.42px #18181b;">did they get ...</span>
<span class="t" style="left:368.81px;top:1771.67px;font-size:28.5px;line-height:28.5px;color:#18181b;letter-spacing:0.584px;-webkit-text-stroke:0.42px #18181b;">If you're referring to a sp...</span>
<span class="t" style="left:775.01px;top:1771.67px;font-size:28.5px;line-height:28.5px;color:#18181b;letter-spacing:0.415px;-webkit-text-stroke:0.42px #18181b;">Yes, the Houston A...</span>
<span class="t" style="left:1203.90px;top:1771.67px;font-size:28.5px;line-height:28.5px;color:#18181b;letter-spacing:1.096px;-webkit-text-stroke:0.8px #18181b;">20.00%</span>
<span class="t m" style="left:1564.00px;top:325.44px;font-size:24px;line-height:24px;color:#71717a;letter-spacing:0.031px;">cdad8852-94cf-4f4a-9329-7b577048d5a8</span>
<span class="t" style="left:2833.62px;top:326.36px;font-size:24.5px;line-height:24.5px;color:#3f3f46;letter-spacing:-0.163px;-webkit-text-stroke:0.25px #3f3f46;">Tag</span>
<span class="t" style="left:1446.05px;top:424.16px;font-size:24.5px;line-height:24.5px;color:#18181b;letter-spacing:-0.148px;-webkit-text-stroke:0.3px #18181b;">Trace</span>
<span class="t" style="left:1524.60px;top:516.76px;font-size:24.5px;line-height:24.5px;color:#3f3f46;letter-spacing:0.533px;-webkit-text-stroke:0.2px #3f3f46;">eval</span>
<span class="t" style="left:1735.72px;top:516.76px;font-size:24.5px;line-height:24.5px;color:#71717a;letter-spacing:0.741px;-webkit-text-stroke:0.25px #71717a;">6.54s</span>
<span class="t" style="left:1541.60px;top:612.76px;font-size:24.5px;line-height:24.5px;color:#3f3f46;letter-spacing:0.372px;-webkit-text-stroke:0.2px #3f3f46;">task</span>
<span class="t" style="left:1738.03px;top:612.76px;font-size:24.5px;line-height:24.5px;color:#71717a;letter-spacing:0.166px;-webkit-text-stroke:0.25px #71717a;">3.53s</span>
<span class="t" style="left:1556.60px;top:708.76px;font-size:24.5px;line-height:24.5px;color:#3f3f46;letter-spacing:0.439px;-webkit-text-stroke:0.4px #3f3f46;">Chat...</span>
<span class="t" style="left:1644.22px;top:708.76px;font-size:24.5px;line-height:24.5px;color:#71717a;letter-spacing:-0.040px;-webkit-text-stroke:0.25px #71717a;">3.53s, 151 tok</span>
<span class="t" style="left:1539.78px;top:804.76px;font-size:24.5px;line-height:24.5px;color:#18181b;letter-spacing:0.742px;-webkit-text-stroke:0.55px #18181b;">Factual</span>
<span class="t" style="left:1741.62px;top:804.76px;font-size:24.5px;line-height:24.5px;color:#71717a;letter-spacing:-0.734px;-webkit-text-stroke:0.25px #71717a;">3.01s</span>
<span class="t" style="left:1556.60px;top:900.76px;font-size:24.5px;line-height:24.5px;color:#3f3f46;letter-spacing:0.439px;-webkit-text-stroke:0.4px #3f3f46;">Chat...</span>
<span class="t" style="left:1640.83px;top:900.76px;font-size:24.5px;line-height:24.5px;color:#71717a;letter-spacing:0.222px;-webkit-text-stroke:0.25px #71717a;">3.01s, 794 tok</span>
<span class="t m" style="left:1982.30px;top:377.24px;font-size:24px;line-height:24px;color:#24292e;letter-spacing:0.025px;-webkit-text-stroke:0.22px #24292e;clip-path:inset(6.2px 0 0 0);">there have been instances where controversy or scandal has</span>
<span class="t m" style="left:1982.30px;top:410.77px;font-size:24px;line-height:24px;color:#24292e;letter-spacing:0.025px;-webkit-text-stroke:0.22px #24292e;">surrounded a championship, such as the Houston Astros' 2017 win,</span>
<span class="t m" style="left:1982.30px;top:444.30px;font-size:24px;line-height:24px;color:#24292e;letter-spacing:0.025px;-webkit-text-stroke:0.22px #24292e;">which was scrutinized due to a sign-stealing scandal. Despite</span>
<span class="t m" style="left:1982.30px;top:477.83px;font-size:24px;line-height:24px;color:#24292e;letter-spacing:0.025px;-webkit-text-stroke:0.22px #24292e;">the controversy, the Astros retained their title.</span>
<span class="t m" style="left:1884.50px;top:511.36px;font-size:24px;line-height:24px;color:#a1a1aa;">4</span>
<span class="t m" style="left:1885.50px;top:544.89px;font-size:24px;line-height:24px;color:#a1a1aa;">5</span>
<span class="t m" style="left:1982.30px;top:544.89px;font-size:24px;line-height:24px;color:#24292e;letter-spacing:0.025px;-webkit-text-stroke:0.22px #24292e;">If you clarify the context or the specific World Series in</span>
<span class="t m" style="left:1982.30px;top:578.42px;font-size:24px;line-height:24px;color:#24292e;letter-spacing:0.025px;-webkit-text-stroke:0.22px #24292e;">question, I can give you a more detailed response!</span>
<span class="t m" style="left:1885.50px;top:611.95px;font-size:24px;line-height:24px;color:#a1a1aa;">6</span>
<span class="t m" style="left:1952.30px;top:611.95px;font-size:24px;line-height:24px;color:#6f42c1;letter-spacing:0.025px;-webkit-text-stroke:0.22px #6f42c1;">expected</span>
<span class="t m" style="left:2068.10px;top:611.95px;font-size:24px;line-height:24px;color:#24292e;letter-spacing:0.025px;-webkit-text-stroke:0.22px #24292e;">: Yes, the Houston Astros were allowed to keep their 2017</span>
<span class="t m" style="left:1952.30px;top:645.48px;font-size:24px;line-height:24px;color:#24292e;letter-spacing:0.025px;-webkit-text-stroke:0.22px #24292e;">World Series title despite the sign-stealing scandal. Major League</span>
<span class="t m" style="left:1952.30px;top:679.01px;font-size:24px;line-height:24px;color:#24292e;letter-spacing:0.025px;-webkit-text-stroke:0.22px #24292e;">Baseball (MLB) did not strip the Astros of their championship,</span>
<span class="t m" style="left:1952.30px;top:712.54px;font-size:24px;line-height:24px;color:#24292e;letter-spacing:0.025px;-webkit-text-stroke:0.22px #24292e;">although the team faced other penalties for their actions.</span>
<span class="t m" style="left:1885.50px;top:746.07px;font-size:24px;line-height:24px;color:#a1a1aa;">7</span>
<span class="t m" style="left:1952.30px;top:746.07px;font-size:24px;line-height:24px;color:#6f42c1;letter-spacing:0.025px;-webkit-text-stroke:0.22px #6f42c1;">metadata</span>
<span class="t m" style="left:2068.10px;top:746.07px;font-size:24px;line-height:24px;color:#24292e;letter-spacing:0.025px;-webkit-text-stroke:0.22px #24292e;">: </span>
<span class="t m" style="left:2097.05px;top:746.07px;font-size:24px;line-height:24px;color:#71717a;letter-spacing:0.025px;-webkit-text-stroke:0.22px #71717a;">{}</span>
<span class="t" style="left:1865.52px;top:831.96px;font-size:24.5px;line-height:24.5px;color:#3f3f46;letter-spacing:0.902px;-webkit-text-stroke:0.45px #3f3f46;">Output</span>
<span class="t" style="left:1880.55px;top:889.73px;font-size:23px;line-height:23px;color:#3f3f46;letter-spacing:0.889px;-webkit-text-stroke:0.3px #3f3f46;">YAML</span>
<span class="t m" style="left:1885.50px;top:941.14px;font-size:24px;line-height:24px;color:#a1a1aa;">1</span>
<span class="t m" style="left:1952.30px;top:941.14px;font-size:24px;line-height:24px;color:#6f42c1;letter-spacing:0.025px;-webkit-text-stroke:0.22px #6f42c1;">score</span>
<span class="t m" style="left:2024.67px;top:941.14px;font-size:24px;line-height:24px;color:#24292e;letter-spacing:0.025px;-webkit-text-stroke:0.22px #24292e;">: 0.2</span>
<span class="t" style="left:1876.12px;top:1025.06px;font-size:24.5px;line-height:24.5px;color:#3f3f46;letter-spacing:0.918px;-webkit-text-stroke:0.45px #3f3f46;">Expected</span>
<span class="t" style="left:1864.52px;top:1112.96px;font-size:24.5px;line-height:24.5px;color:#3f3f46;letter-spacing:0.946px;-webkit-text-stroke:0.45px #3f3f46;">Metadata</span>
<span class="t" style="left:1880.55px;top:1171.23px;font-size:23px;line-height:23px;color:#3f3f46;letter-spacing:0.889px;-webkit-text-stroke:0.3px #3f3f46;">YAML</span>
<span class="t m" style="left:1885.50px;top:1221.74px;font-size:24px;line-height:24px;color:#a1a1aa;">1</span>
<span class="t m" style="left:1952.30px;top:1221.74px;font-size:24px;line-height:24px;color:#6f42c1;letter-spacing:0.025px;-webkit-text-stroke:0.22px #6f42c1;">choice</span>
<span class="t m" style="left:2039.15px;top:1221.74px;font-size:24px;line-height:24px;color:#24292e;letter-spacing:0.025px;-webkit-text-stroke:0.22px #24292e;">: F</span>
<span class="t m" style="left:1885.50px;top:1255.34px;font-size:24px;line-height:24px;color:#a1a1aa;">2</span>
<span class="t m" style="left:1952.30px;top:1255.34px;font-size:24px;line-height:24px;color:#6f42c1;letter-spacing:0.025px;-webkit-text-stroke:0.22px #6f42c1;">rationale</span>
<span class="t m" style="left:2082.57px;top:1255.34px;font-size:24px;line-height:24px;color:#24292e;letter-spacing:0.025px;-webkit-text-stroke:0.22px #24292e;">: </span>
<span class="t m" style="left:2111.52px;top:1255.34px;font-size:24px;line-height:24px;color:#5a3d33;letter-spacing:0.025px;-webkit-text-stroke:0.22px #5a3d33;">|-</span>
<span class="t m" style="left:1885.50px;top:1288.94px;font-size:24px;line-height:24px;color:#a1a1aa;">3</span>
<span class="t m" style="left:1982.30px;top:1288.94px;font-size:24px;line-height:24px;color:#24292e;letter-spacing:0.025px;-webkit-text-stroke:0.22px #24292e;">1. The expert answer clearly states that the Houston Astros were</span>
<span class="t m" style="left:1982.30px;top:1322.54px;font-size:24px;line-height:24px;color:#24292e;letter-spacing:0.025px;-webkit-text-stroke:0.22px #24292e;">allowed to keep their 2017 World Series title despite the sign-</span>
<span class="t m" style="left:1982.30px;top:1356.14px;font-size:24px;line-height:24px;color:#24292e;letter-spacing:0.025px;-webkit-text-stroke:0.22px #24292e;">stealing scandal.</span>
<span class="t m" style="left:1884.50px;top:1389.74px;font-size:24px;line-height:24px;color:#a1a1aa;">4</span>
<span class="t m" style="left:1982.30px;top:1389.74px;font-size:24px;line-height:24px;color:#24292e;letter-spacing:0.025px;-webkit-text-stroke:0.22px #24292e;">2. The submitted answer also mentions the Houston Astros' 2017</span>
<span class="t m" style="left:1982.30px;top:1423.34px;font-size:24px;line-height:24px;color:#24292e;letter-spacing:0.025px;-webkit-text-stroke:0.22px #24292e;">World Series win and the sign-stealing scandal, and confirms</span>
<span class="t m" style="left:1982.30px;top:1456.94px;font-size:24px;line-height:24px;color:#24292e;letter-spacing:0.025px;-webkit-text-stroke:0.22px #24292e;">that the Astros retained their title.</span>
<span class="t m" style="left:1885.50px;top:1490.54px;font-size:24px;line-height:24px;color:#a1a1aa;">5</span>
<span class="t m" style="left:1982.30px;top:1490.54px;font-size:24px;line-height:24px;color:#24292e;letter-spacing:0.025px;-webkit-text-stroke:0.22px #24292e;">3. The submitted answer provides additional context by</span>
<span class="t m" style="left:1982.30px;top:1524.14px;font-size:24px;line-height:24px;color:#24292e;letter-spacing:0.025px;-webkit-text-stroke:0.22px #24292e;">mentioning that generally, once a team wins the World Series,</span>
<span class="t m" style="left:1982.30px;top:1557.74px;font-size:24px;line-height:24px;color:#24292e;letter-spacing:0.025px;-webkit-text-stroke:0.22px #24292e;">they are recognized as the champions for that year, and the</span>
<span class="t m" style="left:1982.30px;top:1591.34px;font-size:24px;line-height:24px;color:#24292e;letter-spacing:0.025px;-webkit-text-stroke:0.22px #24292e;">title is not typically revoked.</span>
<span class="t m" style="left:1885.50px;top:1624.94px;font-size:24px;line-height:24px;color:#a1a1aa;">6</span>
<span class="t m" style="left:1982.30px;top:1624.94px;font-size:24px;line-height:24px;color:#24292e;letter-spacing:0.025px;-webkit-text-stroke:0.22px #24292e;">4. The submitted answer also asks for more details to provide a</span>
<span class="t m" style="left:1982.30px;top:1658.54px;font-size:24px;line-height:24px;color:#24292e;letter-spacing:0.025px;-webkit-text-stroke:0.22px #24292e;">more accurate answer, which is not present in the expert answer.</span>
<span class="t m" style="left:1885.50px;top:1692.14px;font-size:24px;line-height:24px;color:#a1a1aa;">7</span>
<span class="t m" style="left:1982.30px;top:1692.14px;font-size:24px;line-height:24px;color:#24292e;letter-spacing:0.025px;-webkit-text-stroke:0.22px #24292e;">5. Despite asking for more context, the factual information</span>
<span class="t m" style="left:1982.30px;top:1725.74px;font-size:24px;line-height:24px;color:#24292e;letter-spacing:0.025px;-webkit-text-stroke:0.22px #24292e;">provided in the submitted answer is consistent with the expert</span>
<span class="t m" style="left:1982.30px;top:1759.34px;font-size:24px;line-height:24px;color:#24292e;letter-spacing:0.025px;-webkit-text-stroke:0.22px #24292e;">answer.</span>
</div>
<script>(function(){var s=window.innerWidth/2974;if(s>0&&Math.abs(s-1)>0.01){document.body.style.zoom=s;}})();</script>
</body></html>
